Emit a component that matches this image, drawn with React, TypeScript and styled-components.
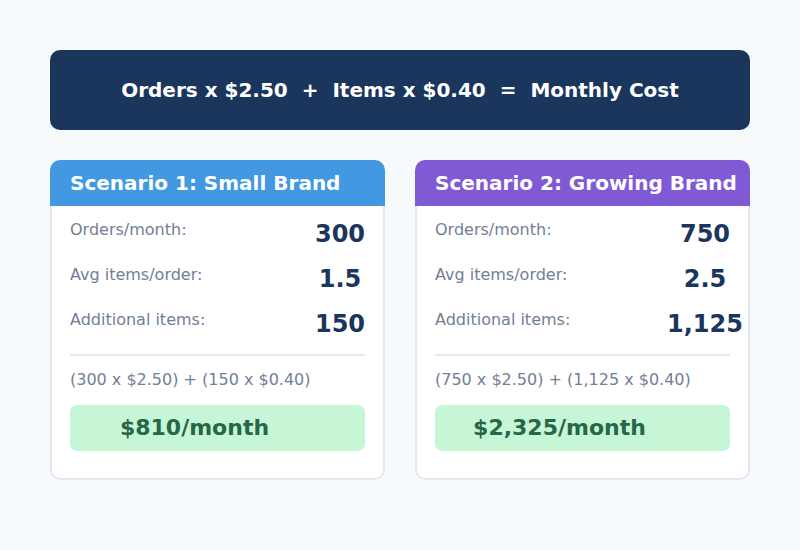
import React from 'react';
import styled, { createGlobalStyle } from 'styled-components';

const GlobalStyle = createGlobalStyle`
  html, body {
    margin: 0;
    padding: 0;
    background: #f7fafc;
    font-family: "DejaVu Sans", Verdana, sans-serif;
  }
`;

const scenarios = [
  {
    id: 1,
    title: 'Scenario 1: Small Brand',
    accent: '#4299e1',
    orders: '300',
    avgItems: '1.5',
    additional: '150',
    formula: '(300 x $2.50) + (150 x $0.40)',
    total: '$810/month',
  },
  {
    id: 2,
    title: 'Scenario 2: Growing Brand',
    accent: '#805ad5',
    orders: '750',
    avgItems: '2.5',
    additional: '1,125',
    formula: '(750 x $2.50) + (1,125 x $0.40)',
    total: '$2,325/month',
  },
];

const Page = styled.div`
  width: 800px;
  height: 550px;
  box-sizing: border-box;
  padding: 50px;
  display: flex;
  flex-direction: column;
  gap: 30px;
`;

const Banner = styled.div`
  height: 80px;
  border-radius: 10px;
  background: #1a365d;
  color: #ffffff;
  display: flex;
  align-items: center;
  justify-content: center;
  font-size: 20px;
  font-weight: 700;
  white-space: pre;
`;

const CardGrid = styled.div`
  display: grid;
  grid-template-columns: 335px 335px;
  gap: 30px;
`;

const Card = styled.div`
  height: 320px;
  display: flex;
  flex-direction: column;
  border-radius: 10px;
  overflow: hidden;
  background: #ffffff;
`;

const CardHeader = styled.div<{ $accent: string }>`
  height: 46px;
  flex-shrink: 0;
  background: ${({ $accent }) => $accent};
  color: #ffffff;
  font-size: 20px;
  font-weight: 700;
  white-space: nowrap;
  display: flex;
  align-items: center;
  padding: 0 20px;
`;

const CardBody = styled.div`
  flex: 1;
  border: 2px solid #e2e8f0;
  border-top: none;
  border-radius: 0 0 10px 10px;
  padding: 15px 18px 0;
  display: flex;
  flex-direction: column;
`;

const Rows = styled.div`
  display: flex;
  flex-direction: column;
  gap: 19px;
`;

const Row = styled.div`
  display: flex;
  align-items: flex-start;
  height: 26px;
`;

const Label = styled.span`
  flex: 1;
  font-size: 16px;
  line-height: 18px;
  color: #718096;
`;

const Value = styled.span`
  width: 50px;
  display: flex;
  justify-content: center;
  white-space: nowrap;
  font-size: 24px;
  line-height: 26px;
  font-weight: 700;
  color: #1a365d;
`;

const Divider = styled.hr`
  margin: 17px 0 0;
  border: none;
  height: 2px;
  background: #e2e8f0;
`;

const Formula = styled.div`
  margin-top: 15px;
  font-size: 16px;
  line-height: 18px;
  color: #718096;
  white-space: nowrap;
`;

const Total = styled.div`
  margin-top: 16px;
  height: 46px;
  border-radius: 7px;
  background: #c6f6d5;
  color: #276749;
  font-size: 22px;
  font-weight: 700;
  line-height: 46px;
  text-align: center;
  padding-right: 46px;
  white-space: nowrap;
`;

export default function App() {
  return (
    <>
      <GlobalStyle />
      <Page>
        <Banner>Orders x $2.50  +  Items x $0.40  =  Monthly Cost</Banner>
        <CardGrid>
          {scenarios.map((s) => (
            <Card key={s.id}>
              <CardHeader $accent={s.accent}>{s.title}</CardHeader>
              <CardBody>
                <Rows>
                  <Row>
                    <Label>Orders/month:</Label>
                    <Value>{s.orders}</Value>
                  </Row>
                  <Row>
                    <Label>Avg items/order:</Label>
                    <Value>{s.avgItems}</Value>
                  </Row>
                  <Row>
                    <Label>Additional items:</Label>
                    <Value>{s.additional}</Value>
                  </Row>
                </Rows>
                <Divider />
                <Formula>{s.formula}</Formula>
                <Total>{s.total}</Total>
              </CardBody>
            </Card>
          ))}
        </CardGrid>
      </Page>
    </>
  );
}
